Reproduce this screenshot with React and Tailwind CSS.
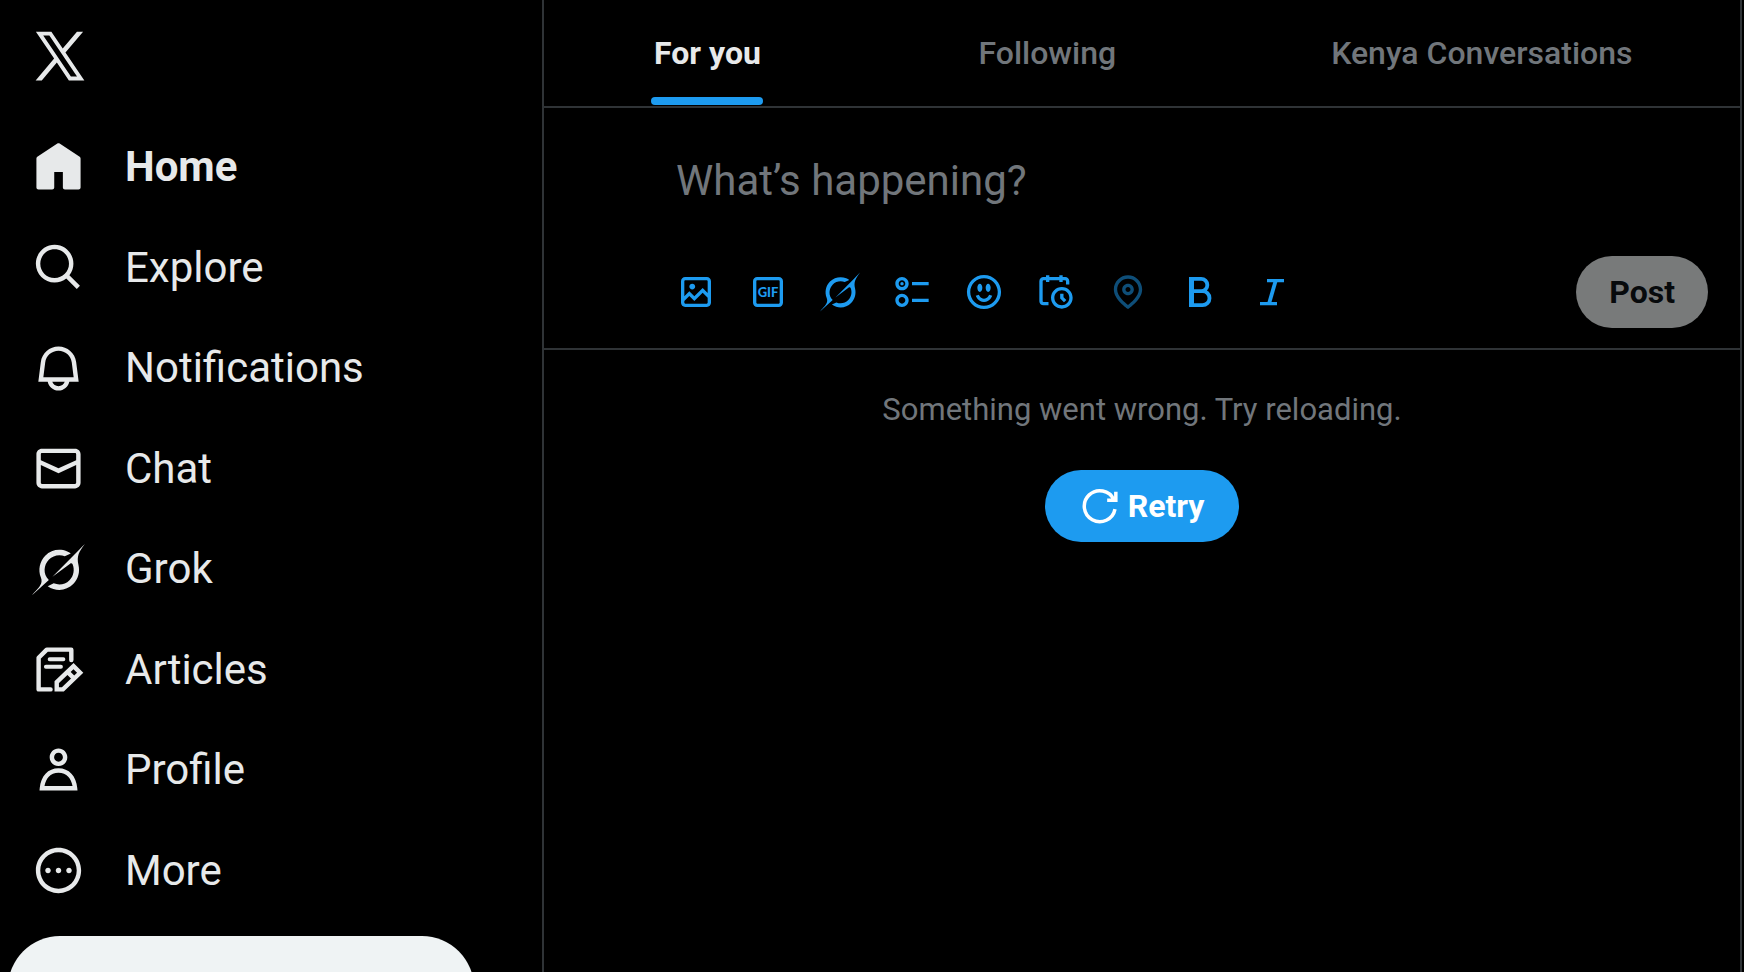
import React, { useState } from "react";

const navItems = [
  {
    label: "Home",
    d: "M21.591 7.146L12.52 1.157c-.316-.21-.724-.21-1.04 0l-9.071 5.99c-.26.173-.409.456-.409.757v13.183c0 .502.418.913.929.913H9.14c.51 0 .929-.41.929-.913v-7.075h3.909v7.075c0 .502.417.913.928.913h6.165c.511 0 .929-.41.929-.913V7.904c0-.301-.158-.584-.408-.758z",
  },
  {
    label: "Explore",
    d: "M10.25 3.75c-3.59 0-6.5 2.91-6.5 6.5s2.91 6.5 6.5 6.5c1.795 0 3.419-.726 4.596-1.904 1.178-1.177 1.904-2.801 1.904-4.596 0-3.59-2.91-6.5-6.5-6.5zm-8.5 6.5c0-4.694 3.806-8.5 8.5-8.5s8.5 3.806 8.5 8.5c0 1.986-.682 3.815-1.824 5.262l4.781 4.781-1.414 1.414-4.781-4.781c-1.447 1.142-3.276 1.824-5.262 1.824-4.694 0-8.5-3.806-8.5-8.5z",
  },
  {
    label: "Notifications",
    d: "M19.993 9.042C19.48 5.017 16.054 2 11.996 2s-7.49 3.021-7.999 7.051L2.866 18H7.1c.463 2.282 2.481 4 4.9 4s4.437-1.718 4.9-4h4.236l-1.143-8.958zM12 20c-1.306 0-2.417-.835-2.829-2h5.658c-.412 1.165-1.523 2-2.829 2zm-6.866-4l.847-6.698C6.364 6.272 8.941 4 11.996 4s5.627 2.268 6.013 5.295L18.864 16H5.134z",
  },
  {
    label: "Chat",
    d: "M1.998 5.5c0-1.381 1.119-2.5 2.5-2.5h15c1.381 0 2.5 1.119 2.5 2.5v13c0 1.381-1.119 2.5-2.5 2.5h-15c-1.381 0-2.5-1.119-2.5-2.5v-13zm2.5-.5c-.276 0-.5.224-.5.5v2.764l8 3.638 8-3.636V5.5c0-.276-.224-.5-.5-.5h-15zm15.5 5.463l-8 3.636-8-3.638V18.5c0 .276.224.5.5.5h15c.276 0 .5-.224.5-.5v-8.037z",
  },
  { label: "Grok", icon: "grok" },
  { label: "Articles", icon: "articles" },
  {
    label: "Profile",
    d: "M5.651 19h12.698c-.337-1.8-1.023-3.21-1.945-4.19C15.318 13.65 13.838 13 12 13s-3.317.65-4.404 1.81c-.922.98-1.608 2.39-1.945 4.19zm.486-5.56C7.627 11.85 9.648 11 12 11s4.373.85 5.863 2.44c1.477 1.58 2.366 3.8 2.632 6.46l.11 1.1H3.395l.11-1.1c.266-2.66 1.155-4.88 2.632-6.46zM12 4c-1.105 0-2 .9-2 2s.895 2 2 2 2-.9 2-2-.895-2-2-2zM8 6c0-2.21 1.791-4 4-4s4 1.79 4 4-1.791 4-4 4-4-1.79-4-4z",
  },
  {
    label: "More",
    d: "M3.75 12c0-4.56 3.69-8.25 8.25-8.25s8.25 3.69 8.25 8.25-3.69 8.25-8.25 8.25S3.75 16.56 3.75 12zM12 1.75C6.34 1.75 1.75 6.34 1.75 12S6.34 22.25 12 22.25 22.25 17.66 22.25 12 17.66 1.75 12 1.75zm-4.75 11.5c.69 0 1.25-.56 1.25-1.25s-.56-1.25-1.25-1.25S6 11.31 6 12s.56 1.25 1.25 1.25zm9.5 0c.69 0 1.25-.56 1.25-1.25s-.56-1.25-1.25-1.25-1.25.56-1.25 1.25.56 1.25 1.25 1.25zM13.25 12c0 .69-.56 1.25-1.25 1.25s-1.25-.56-1.25-1.25.56-1.25 1.25-1.25 1.25.56 1.25 1.25z",
  },
];

const tabs = ["For you", "Following", "Kenya Conversations"];

const tools = [
  {
    label: "Add photos or video",
    d: "M3 5.5C3 4.119 4.119 3 5.5 3h13C19.881 3 21 4.119 21 5.5v13c0 1.381-1.119 2.5-2.5 2.5h-13C4.119 21 3 19.881 3 18.5v-13zM5.5 5c-.276 0-.5.224-.5.5v9.086l3-3 3 3 5-5 3 3V5.5c0-.276-.224-.5-.5-.5h-13zM19 15.414l-3-3-5 5-3-3-3 3V18.5c0 .276.224.5.5.5h13c.276 0 .5-.224.5-.5v-3.086zM9.75 7C8.784 7 8 7.784 8 8.75s.784 1.75 1.75 1.75 1.75-.784 1.75-1.75S10.716 7 9.75 7z",
  },
  { label: "Add a GIF", icon: "gif" },
  { label: "Enhance with Grok", icon: "grok" },
  {
    label: "Add poll",
    d: "M6 5c-1.1 0-2 .895-2 2s.9 2 2 2 2-.895 2-2-.9-2-2-2zM2 7c0-2.209 1.79-4 4-4s4 1.791 4 4-1.79 4-4 4-4-1.791-4-4zm20 1H12V6h10v2zM6 15c-1.1 0-2 .895-2 2s.9 2 2 2 2-.895 2-2-.9-2-2-2zm-4 2c0-2.209 1.79-4 4-4s4 1.791 4 4-1.79 4-4 4-4-1.791-4-4zm20 1H12v-2h10v2zM7 7c0 .552-.45 1-1 1s-1-.448-1-1 .45-1 1-1 1 .448 1 1z",
  },
  {
    label: "Add emoji",
    d: "M8 9.5C8 8.119 8.672 7 9.5 7S11 8.119 11 9.5 10.328 12 9.5 12 8 10.881 8 9.5zm6.5 2.5c.828 0 1.5-1.119 1.5-2.5S15.328 7 14.5 7 13 8.119 13 9.5s.672 2.5 1.5 2.5zM12 16c-2.224 0-3.021-2.227-3.051-2.316l-1.897.633c.05.15 1.271 3.684 4.949 3.684s4.898-3.533 4.949-3.684l-1.896-.638c-.033.095-.83 2.322-3.053 2.322zm10.25-4.001c0 5.652-4.598 10.25-10.25 10.25S1.75 17.652 1.75 12 6.348 1.75 12 1.75 22.25 6.348 22.25 12zm-2 0c0-4.549-3.701-8.25-8.25-8.25S3.75 7.451 3.75 12s3.701 8.25 8.25 8.25 8.25-3.701 8.25-8.25z",
  },
  {
    label: "Schedule post",
    d: "M6 3V2h2v1h6V2h2v1h1.5C18.88 3 20 4.119 20 5.5v2h-2v-2c0-.276-.22-.5-.5-.5H16v1h-2V5H8v1H6V5H4.5c-.28 0-.5.224-.5.5v12c0 .276.22.5.5.5h3v2h-3C3.12 20 2 18.88 2 17.5v-12C2 4.119 3.12 3 4.5 3H6zm9.5 8c-2.49 0-4.5 2.015-4.5 4.5s2.01 4.5 4.5 4.5 4.5-2.015 4.5-4.5-2.01-4.5-4.5-4.5zM9 15.5C9 11.91 11.91 9 15.5 9s6.5 2.91 6.5 6.5-2.91 6.5-6.5 6.5S9 19.09 9 15.5zm5.5-2.5h2v2.086l1.71 1.707-1.42 1.414-2.29-2.293V13z",
  },
  {
    label: "Tag location",
    disabled: true,
    d: "M12 7c-1.93 0-3.5 1.57-3.5 3.5S10.07 14 12 14s3.5-1.57 3.5-3.5S13.93 7 12 7zm0 5c-.827 0-1.5-.673-1.5-1.5S11.173 9 12 9s1.5.673 1.5 1.5S12.827 12 12 12zm0-10c-4.687 0-8.5 3.813-8.5 8.5 0 5.967 7.621 11.116 7.945 11.332l.555.37.555-.37c.324-.216 7.945-5.365 7.945-11.332C20.5 5.813 16.687 2 12 2zm0 17.77c-1.665-1.241-6.5-5.196-6.5-9.27C5.5 6.916 8.416 4 12 4s6.5 2.916 6.5 6.5c0 4.073-4.835 8.028-6.5 9.27z",
  },
  { label: "Bold", icon: "bold" },
  { label: "Italic", icon: "italic" },
];

const Icon = ({ icon, d, className }) => {
  if (icon === "grok") {
    return (
      <svg viewBox="0 0 33 32" fill="currentColor" className={className} aria-hidden="true">
        <path d="M12.745 20.54l10.97-8.19c.539-.4 1.307-.244 1.564.38 1.349 3.288.746 7.241-1.938 9.955-2.683 2.714-6.417 3.31-9.83 1.954l-3.728 1.745c5.347 3.697 11.84 2.782 15.898-1.324 3.219-3.255 4.216-7.692 3.284-11.693l.008.009c-1.351-5.878.332-8.227 3.782-13.031L33 0l-4.54 4.59v-.014L12.743 20.544m-2.263 1.987c-3.837-3.707-3.175-9.446.1-12.755 2.42-2.449 6.388-3.448 9.852-1.979l3.72-1.737c-.67-.49-1.53-1.017-2.515-1.387-4.455-1.854-9.789-.931-13.41 2.728-3.483 3.523-4.579 8.94-2.697 13.561 1.405 3.454-.899 5.898-3.22 8.364C1.49 30.2.666 31.074 0 32l10.478-9.466" />
      </svg>
    );
  }

  if (icon === "articles") {
    return (
      <svg viewBox="0 0 24 24" fill="none" stroke="currentColor" strokeWidth="2" className={className} aria-hidden="true">
        <path d="M8.4 21H3V6.7L6.7 3h11.1v4.7" strokeLinecap="round" strokeLinejoin="round" />
        <path d="M8 7.4h6.2M6.3 10.8h6.8" strokeWidth="1.8" strokeLinecap="round" />
        <path d="M11.2 17.7l7.6-7.2 3 3-7.8 7.5h-2.8zM16 13l3 3" />
      </svg>
    );
  }

  if (icon === "gif") {
    return (
      <svg viewBox="0 0 24 24" fill="currentColor" className={className} aria-hidden="true">
        <rect x="4" y="4" width="16" height="16" rx="1.5" fill="none" stroke="currentColor" strokeWidth="2" />
        <text x="12" y="14.8" textAnchor="middle" fontSize="7.8" fontWeight="900" fontFamily="Lato, sans-serif">
          GIF
        </text>
      </svg>
    );
  }

  if (icon === "bold") {
    return (
      <svg viewBox="0 0 24 24" fill="none" stroke="currentColor" className={className} aria-hidden="true">
        <path d="M6.9 3v18" strokeWidth="3" />
        <path d="M6.9 4.1h5.8a3.6 3.6 0 0 1 0 7.4H6.9h6.6a4.2 4.2 0 0 1 0 8.4H6.9" strokeWidth="2.3" />
      </svg>
    );
  }

  if (icon === "italic") {
    return (
      <svg viewBox="0 0 24 24" fill="none" stroke="currentColor" strokeWidth="2" className={className} aria-hidden="true">
        <path d="M9 5.2h10.2M4.8 19H15" />
        <path d="M14.2 5.2L10.2 19" strokeWidth="2.3" />
      </svg>
    );
  }

  if (icon === "retry") {
    return (
      <svg viewBox="0 0 24 24" fill="none" stroke="currentColor" strokeWidth="2.1" className={className} aria-hidden="true">
        <path d="M21 13.9A9.3 9.3 0 1 1 20.3 8.2M21.5 3.4v5.2h-5.2" />
      </svg>
    );
  }

  return (
    <svg viewBox="0 0 24 24" fill="currentColor" className={className} aria-hidden="true">
      <path d={d} />
    </svg>
  );
};

const Sidebar = () => {
  return (
    <header className="w-[542px] shrink-0 pl-2 pr-4 pt-1">
      <a href="#home" aria-label="X" className="flex h-[104px] w-[104px] items-center justify-center">
        <svg viewBox="0 0 24 24" fill="currentColor" className="h-[60px] w-[60px]" aria-hidden="true">
          <path d="M21.742 21.75l-7.563-11.179 7.056-8.321h-2.456l-5.691 6.714-4.54-6.714H2.359l7.29 10.776L2.25 21.75h2.456l6.035-7.118 4.818 7.118h6.191-.008zM7.739 3.818L18.81 20.182h-2.447L5.29 3.818h2.447z" />
        </svg>
      </a>

      <nav className="mt-[9px] flex h-[804px] flex-col">
        {navItems.map((item) => (
          <a
            key={item.label}
            href={`#${item.label.toLowerCase()}`}
            className={`flex flex-1 items-center gap-10 px-6 text-[42px] leading-[52px] ${
              item.label === "Home" ? "font-bold" : "font-normal"
            }`}
          >
            <Icon icon={item.icon} d={item.d} className="h-[53px] w-[53px] shrink-0" />
            <span>{item.label}</span>
          </a>
        ))}
      </nav>

      <button aria-label="Post" className="mt-[15px] h-[104px] w-[90%] rounded-full bg-[#eff3f4]" />
    </header>
  );
};

const Tabs = () => {
  const [active, setActive] = useState(tabs[0]);

  return (
    <div role="tablist" className="flex h-[108px] border-b-2 border-[#2f3336] pb-px">
      {tabs.map((tab) => (
        <button
          key={tab}
          role="tab"
          aria-selected={tab === active}
          onClick={() => setActive(tab)}
          className={`flex flex-auto justify-center px-8 text-[32px] leading-10 ${
            tab === active ? "font-bold text-[#e7e9ea]" : "font-medium text-[#71767b]"
          }`}
        >
          <span className="flex h-full min-w-[112px] flex-col items-center justify-between pt-[33px]">
            {tab}
            {tab === active && <span className="h-2 w-full rounded-full bg-[#1d9bf0]" />}
          </span>
        </button>
      ))}
    </div>
  );
};

const Composer = () => {
  return (
    <div className="border-b-2 border-[#2f3336] pb-5 pl-[132px] pr-8 pt-[49px]">
      <input
        type="text"
        aria-label="Post text"
        placeholder="What’s happening?"
        className="block h-12 w-full bg-transparent text-[42px] leading-[48px] outline-none placeholder:text-[#71767b]"
      />

      <div className="mt-[51px] flex items-center justify-between">
        <div className="flex items-center gap-8 text-[#1d9bf0]">
          {tools.map((tool) => (
            <button key={tool.label} aria-label={tool.label} disabled={tool.disabled} className="disabled:opacity-50">
              <Icon icon={tool.icon} d={tool.d} className="h-10 w-10" />
            </button>
          ))}
        </div>

        <button
          disabled
          className="h-[72px] rounded-full bg-[#eff3f4] px-[33px] text-[32px] font-bold leading-10 text-[#0f1419] disabled:opacity-50"
        >
          Post
        </button>
      </div>
    </div>
  );
};

const App = () => {
  return (
    <div className="flex h-screen overflow-hidden bg-black font-[Roboto,sans-serif] text-[#e7e9ea]">
      <Sidebar />

      <main className="mr-0.5 min-w-0 flex-1 border-x-2 border-[#2f3336]">
        <Tabs />
        <Composer />

        <div className="flex flex-col items-center gap-10 px-8 pt-10">
          <p className="text-[31px] leading-10 text-[#71767b]">
            Something went wrong. Try reloading.
          </p>
          <button className="flex h-[72px] items-center gap-2 rounded-full bg-[#1d9bf0] px-[35px] text-[32px] font-bold leading-10 text-white">
            <Icon icon="retry" className="h-10 w-10" />
            Retry
          </button>
        </div>
      </main>
    </div>
  );
};

export default App;
